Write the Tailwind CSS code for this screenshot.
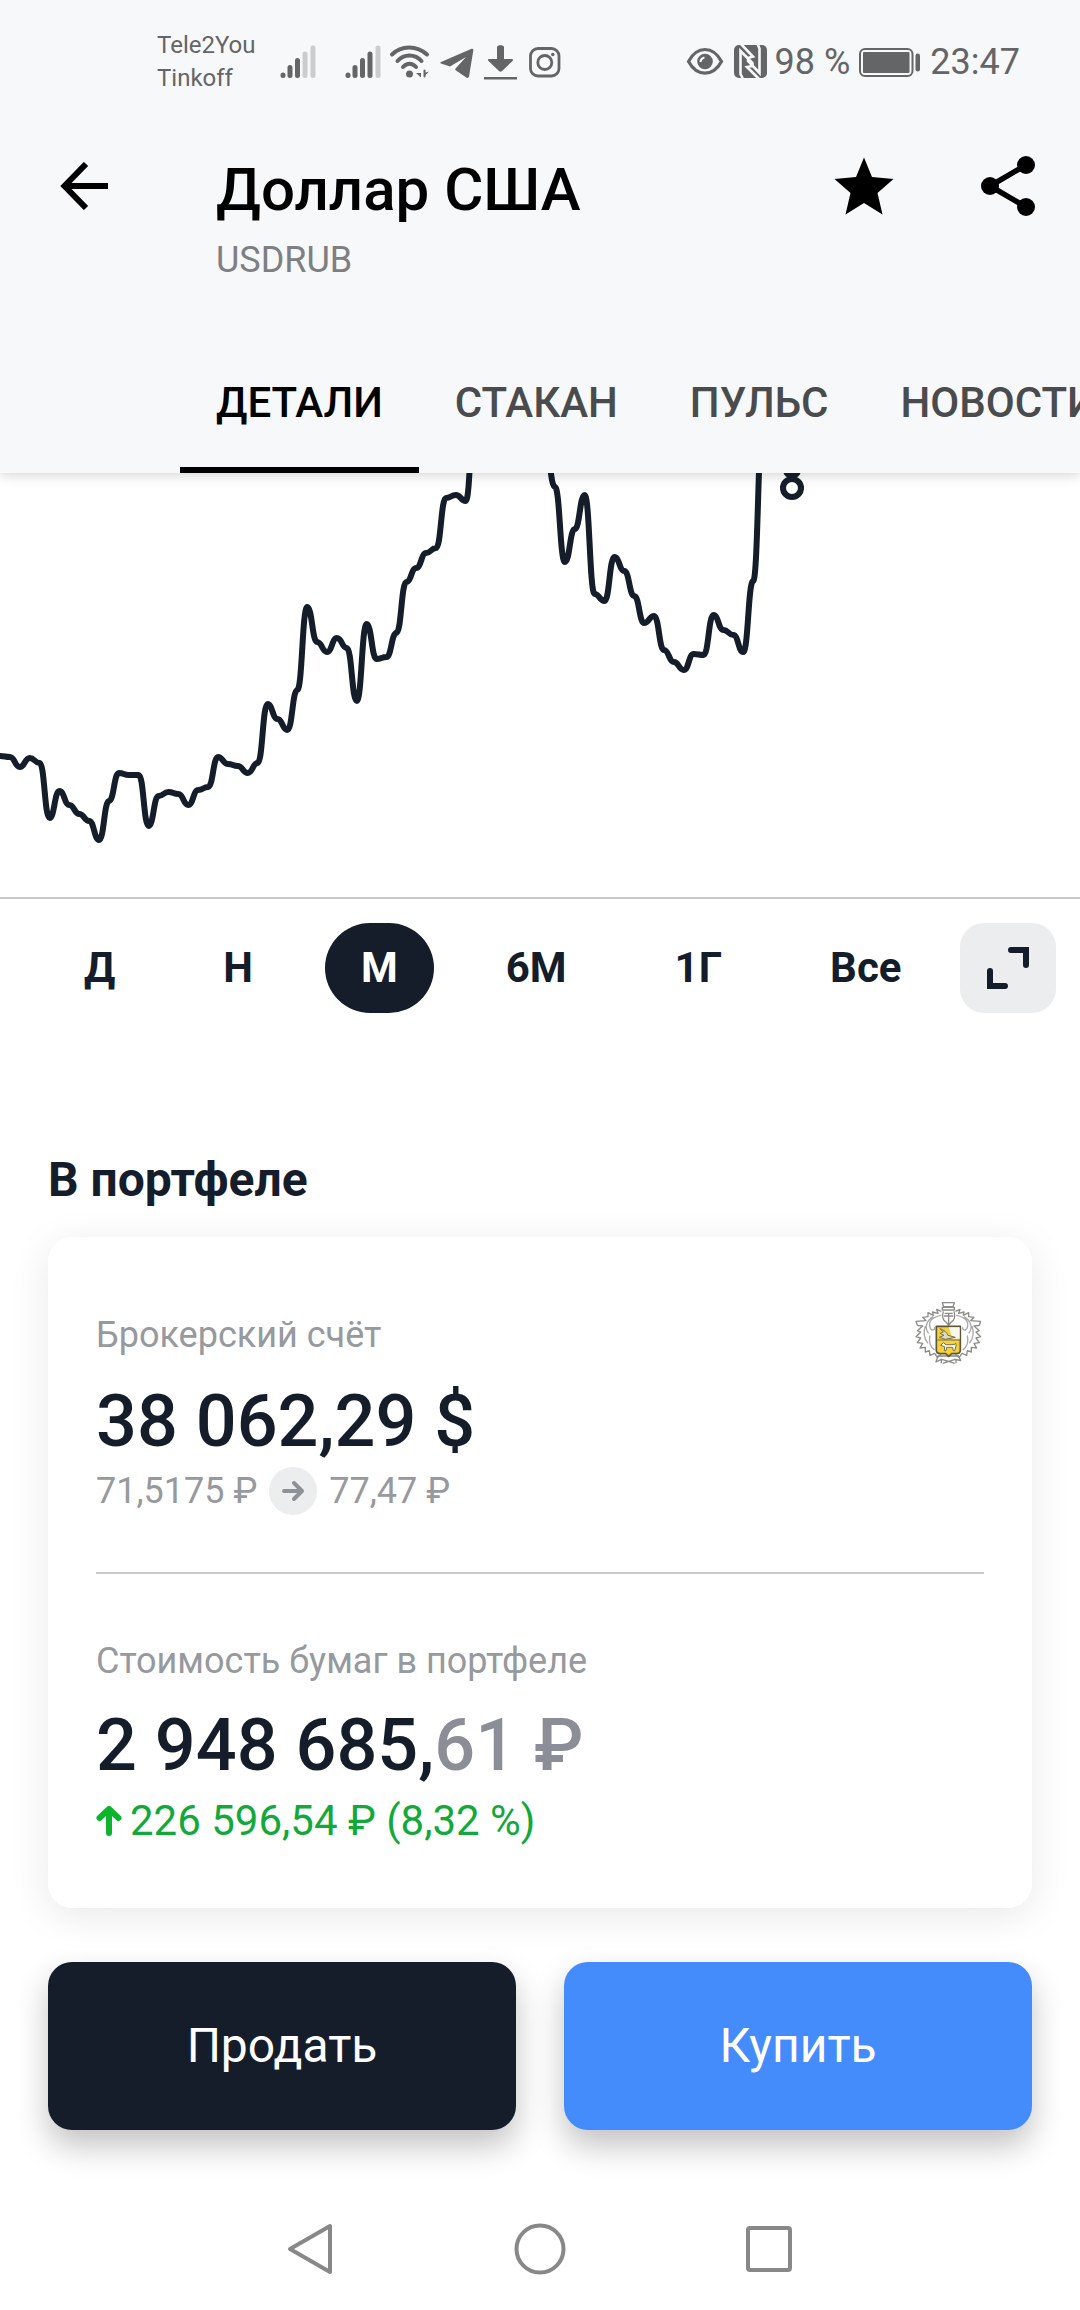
<!DOCTYPE html>
<html lang="ru">
<head>
    <meta charset="utf-8" />
    <meta name="viewport" content="width=device-width, initial-scale=1" />
    <script src="https://cdn.jsdelivr.net/npm/@tailwindcss/browser@4"></script>
    <title>Доллар США</title>
</head>
<body class="bg-white text-[#151d2b] font-['Roboto',sans-serif] overflow-x-hidden">

    <header class="relative z-10 bg-[#f7f8fa] shadow-[0_2px_12px_rgba(0,0,0,0.18)]">
        <!-- status bar -->
        <div class="flex items-center justify-between h-[124px] pl-[157px] pr-[60px] text-[#646566]">
            <div class="flex items-center">
                <div class="w-[123px] text-2xl leading-[33px]">Tele2You<br />Tinkoff</div>
                <svg class="w-9 h-9" viewBox="0 0 36 36" stroke="currentColor" stroke-width="5" stroke-linecap="round">
                    <path d="M3 31v.5M10 23.500v8M17.500 16.500v15" />
                    <path d="M25 10v21.500M33 4v27.500" stroke="#cbcccd" />
                </svg>
                <svg class="w-9 h-9 ml-[29px]" viewBox="0 0 36 36" stroke="currentColor" stroke-width="5" stroke-linecap="round">
                    <path d="M3 31v.5M10 23.500v8M17.500 16.500v15M25 10v21.500" />
                    <path d="M33 4v27.500" stroke="#cbcccd" />
                </svg>
                <svg class="w-[42px] h-9 ml-2" viewBox="0 0 42 36" fill="none" stroke="currentColor" stroke-width="4" stroke-linecap="round">
                    <path d="M3 10.500C12 1 28 1 38 10.500M8.500 17C15 9.500 26 9.500 32.500 17M14 23C18 18.500 23 18.500 27 23" />
                    <circle cx="20.500" cy="30" r="3.500" fill="currentColor" stroke="none" />
                    <path d="M32 25v8.500l-5-4.500h5zM35 25v8.500M35 29l5-1.500-5 5z" fill="currentColor" stroke="none" />
                    <path d="M35.500 26.500v6" stroke-width="2" />
                </svg>
                <svg class="w-9 h-9 ml-2" viewBox="0 0 36 36" fill="currentColor">
                    <path d="M2 19.500C1 19 1 18.500 2 18L32 5c1.500-.5 2.500.2 2.300 1.500L30 32.500c-.3 1.500-1.500 1.800-2.700 1L17 26.500c-1-.7-1-1.400-.2-2.200L27 13 11 22.500z" />
                </svg>
                <svg class="w-9 h-9 ml-2" viewBox="0 0 36 36" fill="currentColor">
                    <path d="M14 3c0-2.500 7-2.500 7 0v12h7.500c1.500 0 2 1 1 2L19 27c-1 1-2 1-3 0L5.500 17c-1-1-.5-2 1-2H14zM1 33h33v2.500H1z" />
                </svg>
                <svg class="w-9 h-9 ml-2" viewBox="0 0 36 36" fill="none" stroke="currentColor" stroke-width="2.800">
                    <rect x="3.500" y="4.500" width="28.500" height="27.500" rx="7.500" />
                    <circle cx="17.800" cy="18.500" r="7" />
                    <circle cx="25.800" cy="10.500" r="1.800" fill="currentColor" stroke="none" />
                </svg>
            </div>
            <div class="flex items-center gap-[7px] text-4xl whitespace-nowrap">
                <svg class="w-10 h-9" viewBox="0 0 40 36" fill="none" stroke="currentColor" stroke-width="3.200">
                    <path d="M3.500 17.500C12 1.500 28 1.500 36.500 17.500C28 33 12 33 3.500 17.500z" />
                    <circle cx="20" cy="17.500" r="7.800" fill="currentColor" stroke="none" />
                    <path d="M15.500 18c.2-2.500 1.500-4 4-4.500" stroke="#f7f8fa" stroke-width="2.200" />
                </svg>
                <svg class="w-9 h-9" viewBox="0 0 36 36">
                    <rect x="2" y="1" width="33" height="33" rx="5" fill="currentColor" />
                    <path d="M9 0l12 12.500L16 14v3l11.500 12V4.500L25.500 0M27 35L15 23l5.500-1v-3L8.500 7v23l2.500 5" fill="none" stroke="#f7f8fa" stroke-width="2.600" />
                </svg>
                <span>98 %</span>
                <svg class="w-[66px] h-9" viewBox="0 0 66 36" fill="currentColor">
                    <rect x="3" y="5" width="52.500" height="27" rx="5" fill="none" stroke="currentColor" stroke-width="2" />
                    <rect x="6" y="8" width="46.500" height="21" rx="1" />
                    <rect x="58.500" y="9.500" width="4.500" height="18" rx="2.200" />
                </svg>
                <span>23:47</span>
            </div>
        </div>

        <!-- title -->
        <div class="flex items-start pt-[26px] pl-[60px] pr-[42px] text-black">
            <button type="button" aria-label="Назад" class="flex items-center h-[72px] cursor-pointer">
                <svg class="w-12 h-12" viewBox="0 0 48 48" fill="none" stroke="currentColor" stroke-width="6">
                    <path d="M48 24H4M26 2L4.500 24L26 46" />
                </svg>
            </button>
            <div class="flex-1 ml-[108px]">
                <h1 class="text-6xl leading-[80px] font-medium">Доллар США</h1>
                <p class="text-4xl leading-[60px] text-[#7e7f82]">USDRUB</p>
            </div>
            <button type="button" aria-label="В избранное" class="h-[72px] cursor-pointer">
                <svg class="w-[72px] h-[72px]" viewBox="0 0 72 72" fill="currentColor">
                    <path d="M36 7.500l8 19.500 21.500 2-16 14 5 21.500L36 53 17.500 64.500l5-21.500-16-14 21.500-2z" />
                </svg>
            </button>
            <button type="button" aria-label="Поделиться" class="h-[72px] ml-[78px] cursor-pointer">
                <svg class="w-[60px] h-[72px]" viewBox="0 0 60 72" fill="currentColor">
                    <path d="M48 15L12 36l36 21" fill="none" stroke="currentColor" stroke-width="5.500" />
                    <circle cx="48" cy="15" r="9" />
                    <circle cx="12" cy="36" r="9" />
                    <circle cx="48" cy="57" r="9" />
                </svg>
            </button>
        </div>

        <!-- tabs -->
        <nav class="flex mt-[47px] pl-[180px] overflow-hidden text-[42px] leading-[60px] font-medium text-[#4a4b4c] whitespace-nowrap">
            <a href="#details" class="shrink-0 px-9 pt-9 pb-[34px] border-b-6 border-black text-black">ДЕТАЛИ</a>
            <a href="#book" class="shrink-0 px-9 pt-9 pb-[34px] border-b-6 border-transparent">СТАКАН</a>
            <a href="#pulse" class="shrink-0 px-9 pt-9 pb-[34px] border-b-6 border-transparent">ПУЛЬС</a>
            <a href="#news" class="shrink-0 px-9 pt-9 pb-[34px] border-b-6 border-transparent">НОВОСТИ</a>
        </nav>
    </header>

    <main>
        <section id="details" class="border-b-2 border-[#c8c9ca]">
            <svg class="block w-full" viewBox="0 0 1080 424" fill="none" stroke="#151d2b" stroke-width="6" stroke-linecap="round" stroke-linejoin="round">
                <path id="priceLine" />
                <circle cx="792" cy="-3" r="6" fill="#151d2b" />
                <circle cx="792" cy="15" r="9" fill="#fff" />
            </svg>
        </section>

        <div class="flex items-center pt-6 pl-12 pr-6 text-[42px] leading-[60px] font-bold">
            <div class="flex gap-9">
                <button type="button" class="h-[90px] px-9 rounded-full cursor-pointer">Д</button>
                <button type="button" class="h-[90px] px-9 rounded-full cursor-pointer">Н</button>
                <button type="button" class="h-[90px] px-9 rounded-full cursor-pointer bg-[#151d2b] text-white">М</button>
                <button type="button" class="h-[90px] px-9 rounded-full cursor-pointer">6М</button>
                <button type="button" class="h-[90px] px-9 rounded-full cursor-pointer">1Г</button>
                <button type="button" class="h-[90px] px-9 rounded-full cursor-pointer">Все</button>
            </div>
            <button type="button" aria-label="На весь экран" class="flex items-center justify-center w-24 h-[90px] ml-auto rounded-3xl bg-[#ebedee] cursor-pointer">
                <svg class="w-12 h-12" viewBox="0 0 48 48" fill="none" stroke="currentColor" stroke-width="6" stroke-linecap="round" stroke-linejoin="round">
                    <path d="M27 6h15v15M6 27v15h15" stroke-linejoin="miter" />
                </svg>
            </button>
        </div>

        <section class="px-12 mt-[137px]">
            <h2 class="text-5xl leading-[60px] font-bold">В портфеле</h2>

            <div class="mt-[27px] px-12 pt-[68px] pb-[57px] rounded-3xl bg-white shadow-[0_8px_40px_rgba(0,0,0,0.09)]">
                <div class="flex justify-between">
                    <p class="text-4xl leading-[60px] text-[#96999d]">Брокерский счёт</p>
                    <svg class="w-[72px] h-[60px] overflow-visible" viewBox="96 105 216 180" fill="none" stroke="#8b8b88" stroke-width="4" stroke-linejoin="round">
                        <path d="M187 98h36l-4 12h-28zM187 112h36v8h-36zM190 124c-4 14-2 26 8 32l8 10 8-10c10-6 12-18 8-32M194 130h24M192 138h28M206 128v36" />
                        <path d="M184 124l-14-6 4 12-16-4 2 10-16-8 0 12-16 2 10 10-30 2 4 12 16 2-16 14 10 4-14 14 14 4-10 14 16 2-8 14 16-2 0 14 12-4 2 14 14-6 8 12 12-8" />
                        <path d="M226 124l14-6-4 12 16-4-2 10 16-8 0 12 16 2-10 10 30 2-4 12-16 2 16 14-10 4 14 14-14 4 10 14-16 2 8 14-16-2 0 14-12-4-2 14-14-6-8 12-12-8" />
                        <path d="M184 136c-26 4-40 18-34 36 4 12 14 10 14 0M160 140c-24 14-26 36-14 50M150 196c-4 18 0 34 14 44M136 168c-8 24-2 40 8 52M228 136c26 4 40 18 34 36-4 12-14 10-14 0M252 140c24 14 26 36 14 50M262 196c4 18 0 34-14 44M276 168c8 24 2 40-8 52" stroke="#a9a9a6" />
                        <path d="M174 258l62 0 6 14-16-4-20 6-22-6-16 8zM184 268v12M228 268v12M188 280l18-6 18 6" />
                        <path d="M169 169h72v72c0 8-6 10-12 10h-14l-9 8-9-8h-16c-8 0-12-4-12-10z" fill="#f3d03c" stroke="#5d5637" stroke-width="5" />
                        <path d="M206 172h33v34h-22z" fill="#faf8ee" stroke="none" />
                        <path d="M180 176c12 4 20 10 24 20l22 6-30 6-18-6 14-6-12-6 10-4z" fill="#ddd9c4" stroke="#77704a" stroke-width="3" />
                        <path d="M172 210h67" stroke="#77704a" stroke-width="3" />
                        <path d="M182 226l8-8 8 6h24l6-4v8l-4 14h-4l-2-10h-18l-2 10h-5l1-12z" fill="#fffdf4" stroke="#77704a" stroke-width="3" />
                    </svg>
                </div>
                <p class="mt-3 text-7xl leading-[90px] font-medium">38 062,29 $</p>
                <div class="flex items-center text-4xl leading-[48px] text-[#96999d]">
                    <span>71,5175 ₽</span>
                    <svg class="w-12 h-12 mx-3" viewBox="0 0 48 48" fill="none">
                        <circle cx="24" cy="24" r="24" fill="#ebedee" />
                        <path d="M15 24h17M25 16l8 8-8 8" stroke="#8e9298" stroke-width="4" stroke-linecap="round" stroke-linejoin="round" />
                    </svg>
                    <span>77,47 ₽</span>
                </div>

                <hr class="mt-[57px] border-t-2 border-[#c8c9ca]" />

                <p class="mt-[57px] text-4xl leading-[60px] text-[#96999d]">Стоимость бумаг в портфеле</p>
                <p class="mt-[10px] text-7xl leading-[90px] font-medium">2 948 685,<span class="text-[#8b8e97]">61 ₽</span></p>
                <p class="flex items-center gap-2 text-[42px] leading-[60px] text-[#12a93a]">
                    <svg class="w-[26px] h-8" viewBox="0 0 26 32" fill="none" stroke="#0db52f" stroke-width="6" stroke-linecap="round" stroke-linejoin="round">
                        <path d="M13 28V5M3.500 13L13 4l9.500 9" />
                    </svg>
                    <span>226 596,54 ₽ (8,32 %)</span>
                </p>
            </div>
        </section>

        <div class="grid grid-cols-2 gap-12 px-12 mt-[54px] text-5xl text-white">
            <button type="button" class="h-[168px] rounded-3xl bg-[#151d2b] shadow-[0_16px_32px_rgba(0,0,0,0.24)] cursor-pointer">Продать</button>
            <button type="button" class="h-[168px] rounded-3xl bg-[#448cfc] shadow-[0_16px_32px_rgba(0,0,0,0.24)] cursor-pointer">Купить</button>
        </div>
    </main>

    <!-- system navigation -->
    <footer class="flex items-center justify-center gap-44 h-[118px] mt-[60px] text-[#888]">
        <button type="button" aria-label="Назад" class="cursor-pointer">
            <svg class="block w-[54px] h-[54px]" viewBox="0 0 54 54" fill="none" stroke="currentColor" stroke-width="4" stroke-linejoin="round">
                <path d="M47 4v46L7 27z" />
            </svg>
        </button>
        <button type="button" aria-label="Домой" class="cursor-pointer">
            <svg class="block w-[54px] h-[54px]" viewBox="0 0 54 54" fill="none" stroke="currentColor" stroke-width="4">
                <circle cx="27" cy="27" r="23.500" />
            </svg>
        </button>
        <button type="button" aria-label="Недавние" class="cursor-pointer">
            <svg class="block w-[54px] h-[54px]" viewBox="0 0 54 54" fill="none" stroke="currentColor" stroke-width="4">
                <rect x="5" y="6" width="42" height="42" rx="2" />
            </svg>
        </button>
    </footer>

    <script>
        // y positions of the month's prices, one every STEP px
        const STEP = 9.91;
        const prices = [
            283, 284, 294, 285, 290, 345, 318, 332, 341, 348, 367, 328, 300, 302, 302, 353,
            323, 319, 321, 332, 317, 314, 284, 291, 293, 300, 290, 231, 246, 257, 217, 134,
            169, 179, 165, 175, 228, 151, 186, 184, 160, 109, 95, 80, 75, 25, 22, 28,
            -80, -120, -140, -150, -140, -120, -80, -29, 14, 89, 56, 22, 121, 128, 84, 98,
            123, 150, 143, 177, 189, 197, 181, 182, 142, 157, 162, 179, 108, -56
        ];

        let d = `M0 ${prices[0]}`;
        for (let i = 1; i < prices.length; i++) {
            const x = i * STEP;
            const mid = x - STEP / 2;
            d += `C${mid} ${prices[i - 1]} ${mid} ${prices[i]} ${x} ${prices[i]}`;
        }
        document.getElementById('priceLine').setAttribute('d', d);
    </script>
</body>
</html>
